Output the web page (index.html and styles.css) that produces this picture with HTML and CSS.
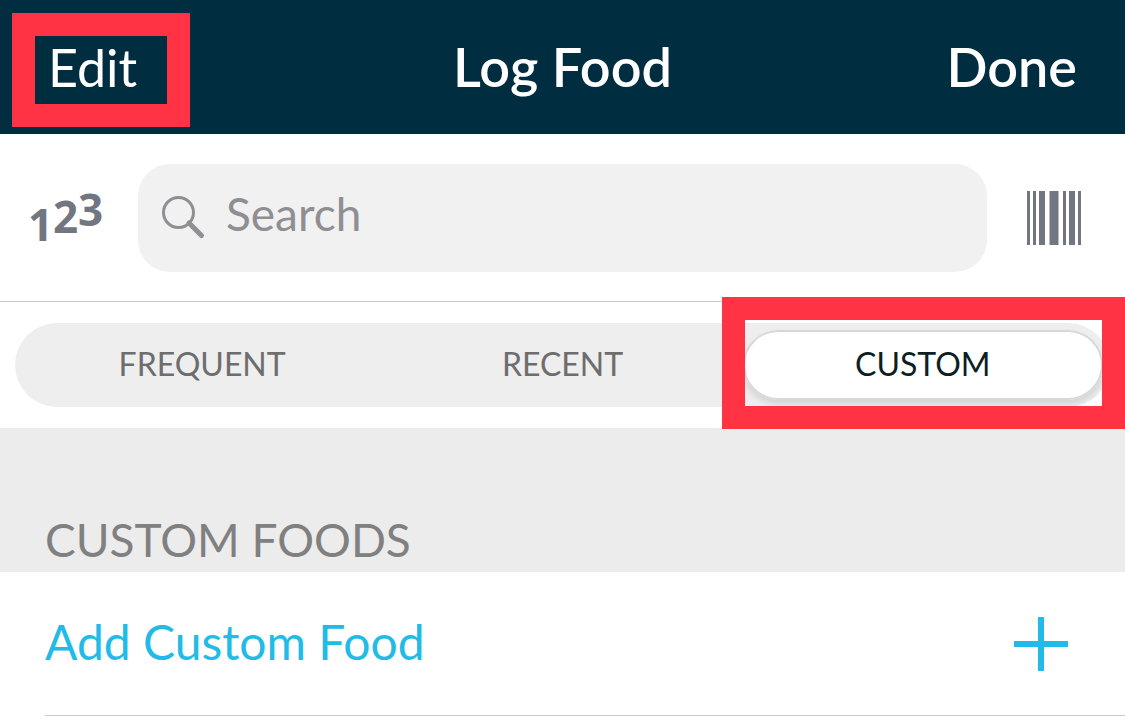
FILE: index.html
```
<!DOCTYPE html>
<html lang="en">
<head>
<meta charset="utf-8">
<meta name="viewport" content="width=device-width, initial-scale=1">
<title>Log Food</title>
<link rel="stylesheet" href="styles.css">
</head>
<body>
<header class="navbar">
  <button class="nav-action nav-edit" type="button">Edit<span class="callout"></span></button>
  <h1 class="nav-title">Log Food</h1>
  <button class="nav-action nav-done" type="button">Done</button>
</header>
<main>
  <form class="search-row">
    <button class="icon-button" type="button" aria-label="Enter calories">
      <svg class="digits" width="76" height="100" viewBox="0 0 76 100">
        <text x="-2" y="73">1</text>
        <text x="23" y="65">2</text>
        <text x="48" y="58">3</text>
      </svg>
    </button>
    <label class="search-field">
      <svg width="44" height="44" viewBox="0 0 44 44" fill="none" stroke="#8e8e93" aria-hidden="true">
        <circle cx="16.500" cy="16.500" r="15" stroke-width="3"/>
        <path d="M27 27 39.500 39.500" stroke-width="5" stroke-linecap="round"/>
      </svg>
      <input class="search-input" type="search" placeholder="Search" aria-label="Search">
    </label>
    <button class="icon-button" type="button" aria-label="Scan barcode">
      <svg width="54" height="54" viewBox="0 0 54 54" fill="#717680">
        <path d="M0 0h3v54H0zM6 0h3v54H6zM12 0h6v54h-6zM22.500 0h9v54h-9zM36 0h3v54h-3zM42 0h6v54h-6zM51 0h3v54h-3z"/>
      </svg>
    </button>
  </form>
  <nav class="tab-row">
    <div class="tabs">
      <button class="tab" type="button">FREQUENT</button>
      <button class="tab" type="button">RECENT</button>
      <button class="tab tab-active" type="button">CUSTOM<span class="callout"></span></button>
    </div>
  </nav>
  <section>
    <h2 class="section-title">CUSTOM FOODS</h2>
    <button class="add-row" type="button">
      <span class="add-label">Add Custom Food</span>
      <svg width="54" height="54" viewBox="0 0 54 54" fill="none" stroke="#21bbe7" stroke-width="6" aria-hidden="true">
        <path d="M27 0V54M0 27H54"/>
      </svg>
    </button>
  </section>
</main>
</body>
</html>
```
FILE: styles.css
```
* {
  box-sizing: border-box;
}

body {
  margin: 0;
  background: #fff;
  font-family: Lato, "Open Sans", sans-serif;
}

button {
  margin: 0;
  padding: 0;
  border: 0;
  background: none;
  font: inherit;
  color: inherit;
}

svg {
  display: block;
  flex: none;
}

.navbar {
  display: grid;
  grid-template-columns: 1fr auto 1fr;
  align-items: center;
  height: 134px;
  padding: 0 48px;
  background: #002d40;
  color: #fff;
}

.nav-action,
.nav-title {
  margin: 0;
  font-size: 54px;
  line-height: 64px;
  font-weight: 600;
}

.nav-edit {
  position: relative;
  justify-self: start;
  font-size: 52px;
  font-weight: 400;
}

.nav-done {
  justify-self: end;
}

.callout {
  position: absolute;
  border: 23px solid #ff3344;
  pointer-events: none;
}

.nav-edit .callout {
  inset: -22px -53px -28px -36px;
}

.search-row {
  display: flex;
  align-items: center;
  height: 168px;
  padding: 0 44px 0 30px;
  border-bottom: 1px solid #c8c7cc;
}

.digits {
  overflow: visible;
  fill: #717680;
  font-family: "Open Sans", sans-serif;
  font-size: 44px;
  font-weight: 700;
}

.search-field {
  flex: 1;
  display: flex;
  align-items: center;
  gap: 20px;
  min-width: 0;
  height: 108px;
  margin: 0 40px 0 32px;
  padding: 0 24px;
  border-radius: 32px;
  background: #f1f1f1;
}

.search-input {
  flex: 1;
  min-width: 0;
  padding: 0 0 8px;
  border: 0;
  outline: 0;
  background: none;
  color: #222;
  font: inherit;
  font-size: 46px;
}

.search-input::placeholder {
  color: #8e8e93;
  opacity: 1;
}

.tab-row {
  padding: 21px 15px;
}

.tabs {
  display: grid;
  grid-template-columns: repeat(3, 1fr);
  height: 84px;
  padding: 7px;
  border-radius: 42px;
  background: #eee;
}

.tab {
  position: relative;
  padding-bottom: 4px;
  border-radius: 36px;
  color: #6d6d6d;
  font-size: 32px;
}

.tab-active {
  box-shadow: 0 0 0 2px #d8d8d8 inset, 0 4px 6px rgba(0, 0, 0, 0.12);
  background: #fff;
  color: #0d1e24;
}

.tab-active .callout {
  inset: -33px -22px -29px -21px;
}

.section-title {
  margin: 0;
  padding: 84px 45px 4px;
  background: #ececec;
  color: #808080;
  font-size: 46px;
  line-height: 56px;
  font-weight: 400;
}

.add-row {
  display: flex;
  align-items: center;
  justify-content: space-between;
  width: calc(100% - 45px);
  height: 144px;
  margin-left: 45px;
  padding: 0 57px 0 0;
  border-bottom: 1px solid #c8c7cc;
  color: #21bbe7;
  font-size: 48px;
}

.add-label {
  padding-bottom: 4px;
}
```
